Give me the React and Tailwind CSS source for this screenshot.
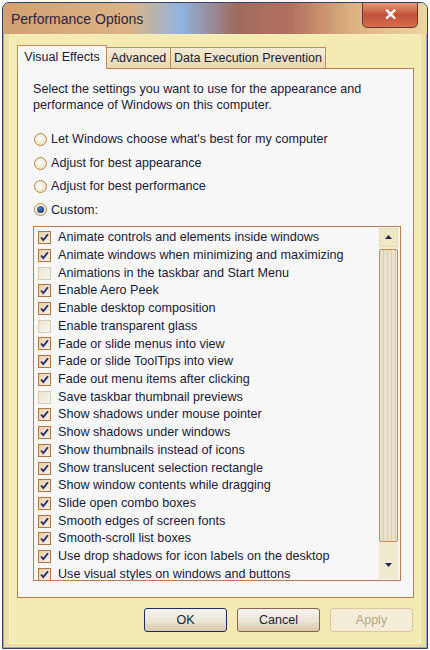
const items = [
  ["Animate controls and elements inside windows", true],
  ["Animate windows when minimizing and maximizing", true],
  ["Animations in the taskbar and Start Menu", false],
  ["Enable Aero Peek", true],
  ["Enable desktop composition", true],
  ["Enable transparent glass", false],
  ["Fade or slide menus into view", true],
  ["Fade or slide ToolTips into view", true],
  ["Fade out menu items after clicking", true],
  ["Save taskbar thumbnail previews", false],
  ["Show shadows under mouse pointer", true],
  ["Show shadows under windows", true],
  ["Show thumbnails instead of icons", true],
  ["Show translucent selection rectangle", true],
  ["Show window contents while dragging", true],
  ["Slide open combo boxes", true],
  ["Smooth edges of screen fonts", true],
  ["Smooth-scroll list boxes", true],
  ["Use drop shadows for icon labels on the desktop", true],
  ["Use visual styles on windows and buttons", true],
];

const radios = [
  ["Let Windows choose what's best for my computer", false],
  ["Adjust for best appearance", false],
  ["Adjust for best performance", false],
  ["Custom:", true],
];

function Radio({ checked }) {
  return (
    <span className="grid h-[13px] w-[13px] shrink-0 place-items-center rounded-full border border-[#c8843c] bg-[radial-gradient(circle_at_40%_40%,#ffffff,#e2d6b4)]">
      {checked && <span className="h-[7px] w-[7px] rounded-full bg-[radial-gradient(circle_at_40%_35%,#4f7fc8,#10245a)]" />}
    </span>
  );
}

function Check({ checked }) {
  return (
    <span
      className={`grid h-[13px] w-[13px] shrink-0 place-items-center border ${
        checked
          ? "border-[#b8743e] bg-[linear-gradient(135deg,#e4d0b0,#f7f1e6)]"
          : "border-[#dccab0] bg-[linear-gradient(135deg,#ebe4d6,#f8f6f2)]"
      }`}
    >
      {checked && (
        <svg width="9" height="9" viewBox="0 0 9 9">
          <path d="M1 4.5 L3.3 7 L8 1.2" fill="none" stroke="#1c2a70" strokeWidth="1.8" />
        </svg>
      )}
    </span>
  );
}

function Btn({ children, def, disabled }) {
  return (
    <button
      className={`h-6 w-[83px] rounded-[3px] border text-[12.5px] ${
        def
          ? "border-[#1e2c6c] bg-[linear-gradient(#f6f4ee_0%,#ece6d8_50%,#dcc8a8_100%)] text-[#1a1a3a]"
          : disabled
          ? "border-[#dcc8a0] bg-[#f4eed8] text-[#b8a484]"
          : "border-[#8a6450] bg-[linear-gradient(#f6f4ee_0%,#ece6d8_50%,#dcc8a8_100%)] text-[#1a1a3a]"
      }`}
    >
      {children}
    </button>
  );
}

export default function App() {
  return (
    <div className="h-[650px] w-[430px] bg-white p-[2px] font-['Liberation_Sans',Arial,sans-serif]">
      <div className="flex h-[647px] flex-col overflow-hidden rounded-t-[7px] border border-[#3a3f6c] bg-[#eee09c] shadow-[inset_0_0_0_1px_#8aa6d8]">
        {/* title bar */}
        <div className="relative h-[31px] shrink-0 bg-[linear-gradient(90deg,#d2a070_0%,#dcb486_30%,#8fb4de_42%,#a06a60_55%,#b4705e_68%,#dcb080_82%,#eed6a0_100%)]">
          <span className="absolute left-[8px] top-[6px] text-[14px] text-[#2a2440]">Performance Options</span>
          <div className="absolute right-[9px] top-[-1px] grid h-[26px] w-[56px] place-items-center rounded-b-[5px] border border-[#6a3a30] bg-[linear-gradient(#e49a78,#c4503a_50%,#d46e4e)]">
            <span className="text-[16px] font-bold leading-none text-white">✕</span>
          </div>
        </div>

        {/* client area */}
        <div className="mx-[6px] mb-[4px] flex flex-1 flex-col border border-[#f8f0c0] bg-[#f3ebb2] px-[7px] pt-[9px]">
          {/* tabs */}
          <div className="flex h-[24px] items-end">
            <div className="relative z-10 -mb-px flex h-[24px] w-[90px] items-center justify-center border border-b-0 border-[#c88a5a] bg-[#f7f7f7] text-[12.5px] text-[#1a1a3a]">
              Visual Effects
            </div>
            <div className="flex h-[21px] w-[64px] items-center justify-center border border-l-0 border-b-0 border-[#c88a5a] bg-[linear-gradient(#f4ecd4,#e8d8b0)] text-[12.5px] text-[#1a1a3a]">
              Advanced
            </div>
            <div className="flex h-[21px] w-[155px] items-center justify-center border border-l-0 border-b-0 border-[#c88a5a] bg-[linear-gradient(#f4ecd4,#e8d8b0)] text-[12.5px] text-[#1a1a3a]">
              Data Execution Prevention
            </div>
          </div>

          {/* panel */}
          <div className="h-[530px] w-[397px] border border-[#c47a50] bg-[#f7f7f7] pl-[15px] pt-[12px] text-[12.6px] text-[#1a1a3a]">
            <p className="leading-[16px]">
              Select the settings you want to use for the appearance and
              <br />
              performance of Windows on this computer.
            </p>
            <div className="mt-[18px] flex flex-col gap-[5.7px]">
              {radios.map(([label, on]) => (
                <div key={label} className="flex h-[17.7px] items-center gap-[4px] pl-[1px]">
                  <Radio checked={on} />
                  <span>{label}</span>
                </div>
              ))}
            </div>

            {/* list box */}
            <div className="mt-[7px] flex h-[355px] w-[368px] overflow-hidden border border-[#c47a50] bg-[#f7f7f7]">
              <div className="flex-1 pl-[4px] pt-[2px]">
                {items.map(([label, on]) => (
                  <div key={label} className="flex h-[17.72px] items-center gap-[7px] whitespace-nowrap">
                    <Check checked={on} />
                    <span>{label}</span>
                  </div>
                ))}
              </div>
              {/* scrollbar */}
              <div className="my-[1px] mr-[2px] flex w-[19px] flex-col bg-[#f2ead0]">
                <div className="grid h-[19px] place-items-center border border-[#e8dcb0] bg-[#f0e8c4]">
                  <svg width="7" height="4" viewBox="0 0 7 4"><path d="M0 4 L3.5 0 L7 4 Z" fill="#1e2858" /></svg>
                </div>
                <div className="mt-[2px] h-[293px] rounded-[2px] border border-[#d08a50] bg-[repeating-linear-gradient(90deg,#e8e2cc_0px,#e8e2cc_3px,#d8b890_4px)]" />
                <div className="flex-1" />
                <div className="mb-[4px] grid h-[19px] place-items-center">
                  <svg width="7" height="4" viewBox="0 0 7 4"><path d="M0 0 L3.5 4 L7 0 Z" fill="#1e2858" /></svg>
                </div>
              </div>
            </div>
          </div>

          {/* buttons */}
          <div className="mt-[10px] flex justify-end gap-[10px]">
            <Btn def>OK</Btn>
            <Btn>Cancel</Btn>
            <Btn disabled>Apply</Btn>
          </div>
        </div>
      </div>
    </div>
  );
}
